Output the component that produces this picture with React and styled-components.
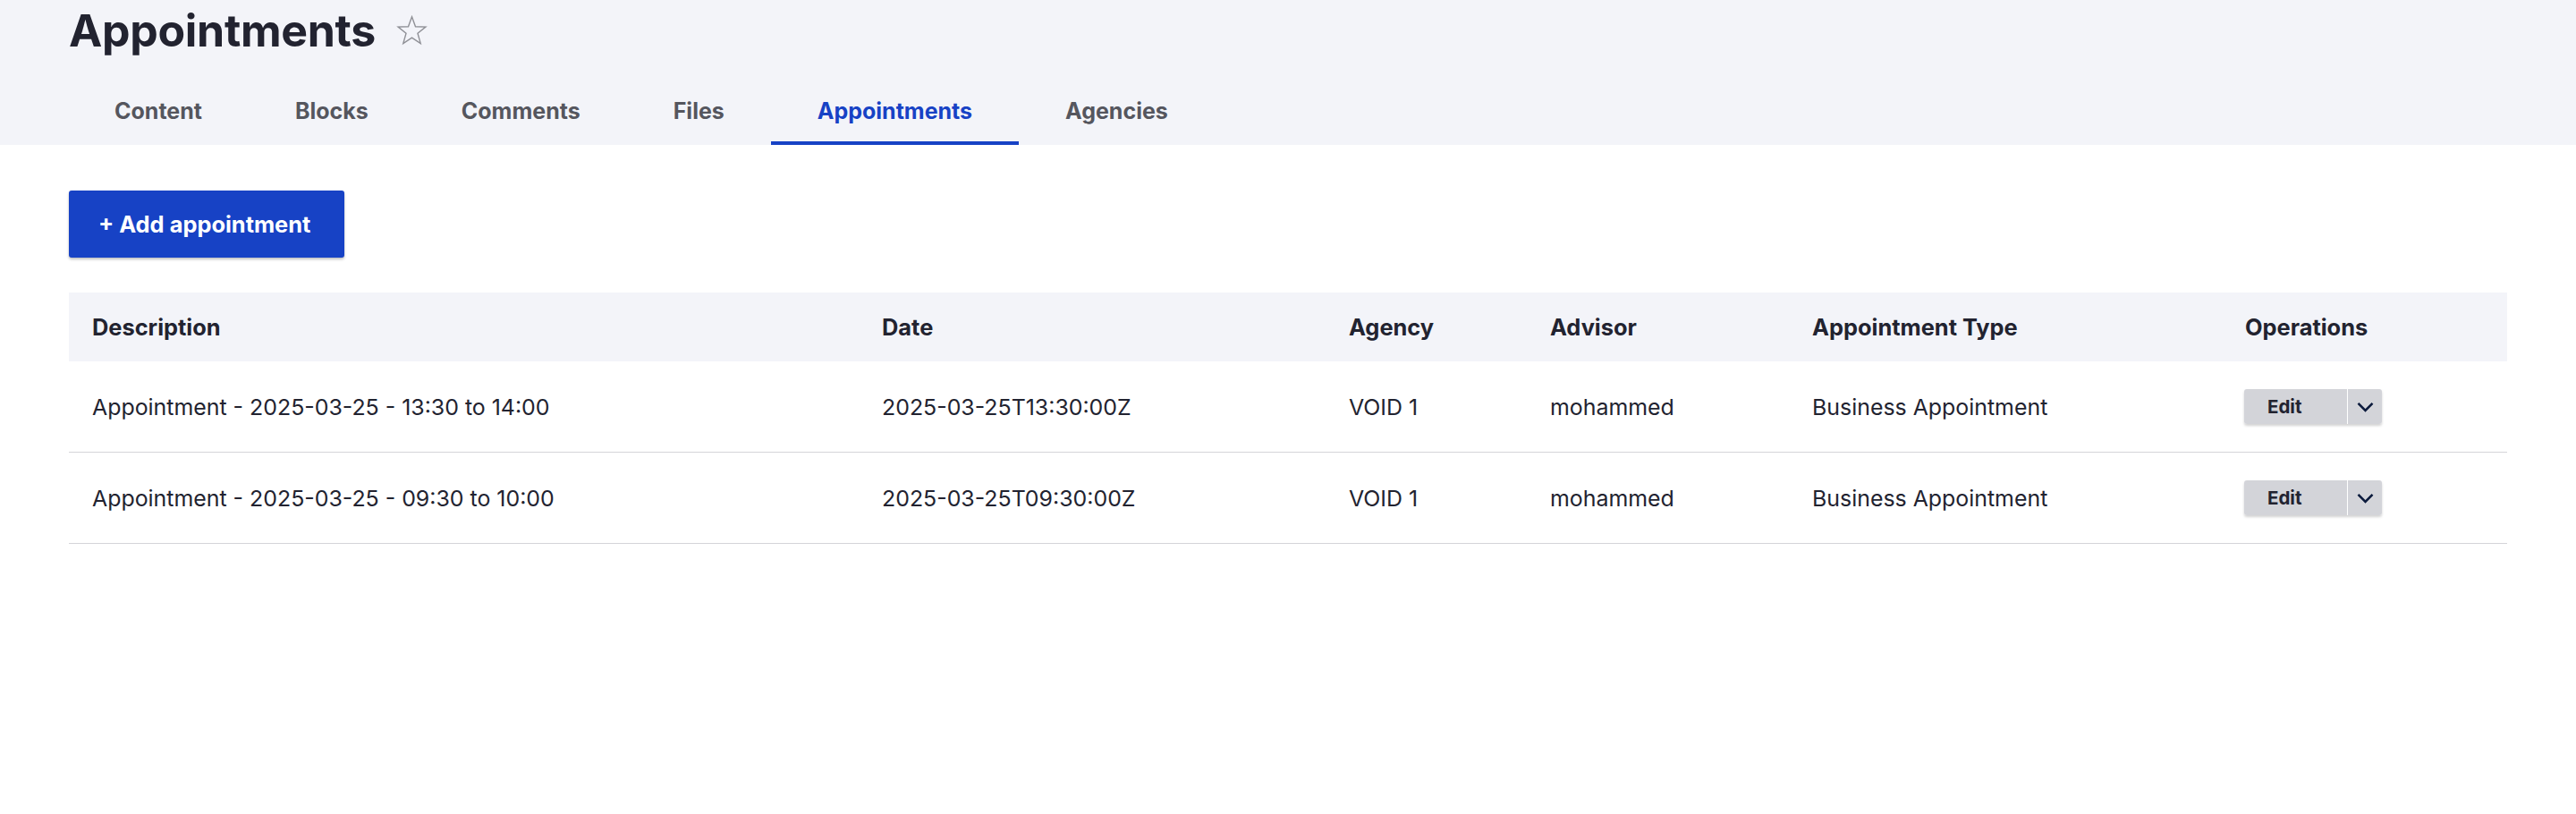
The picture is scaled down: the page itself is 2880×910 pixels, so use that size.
import React from 'react'
import styled, { createGlobalStyle } from 'styled-components'

const GlobalStyle = createGlobalStyle`
    body {
        margin: 0;
        background: #ffffff;
        font-family: 'Inter', 'Noto Sans', sans-serif;
        color: #222330;
    }
`

const tabs = ['Content', 'Blocks', 'Comments', 'Files', 'Appointments', 'Agencies']

const columns = ['Description', 'Date', 'Agency', 'Advisor', 'Appointment Type', 'Operations']

const rows = [
    {
        description: 'Appointment - 2025-03-25 - 13:30 to 14:00',
        date: '2025-03-25T13:30:00Z',
        agency: 'VOID 1',
        advisor: 'mohammed',
        type: 'Business Appointment'
    },
    {
        description: 'Appointment - 2025-03-25 - 09:30 to 10:00',
        date: '2025-03-25T09:30:00Z',
        agency: 'VOID 1',
        advisor: 'mohammed',
        type: 'Business Appointment'
    }
]

const Header = styled.header`
    background: #f3f4f9;
    padding: 4px 77px 0;
`

const TitleRow = styled.div`
    display: flex;
    align-items: center;
    gap: 22px;
`

const Title = styled.h1`
    margin: 0;
    font-size: 50px;
    line-height: 60px;
    font-weight: 700;
    letter-spacing: -0.3px;
    color: #222330;
`

const Tabs = styled.nav`
    display: flex;
    margin: 21px 0 0 -1px;
`

const Tab = styled.a`
    display: block;
    padding: 21px 52px 16px;
    font-size: 25px;
    line-height: 36px;
    font-weight: 700;
    color: ${props => props.active ? '#1742c5' : '#55565e'};
    border-bottom: 4px solid ${props => props.active ? '#1742c5' : 'transparent'};
    text-decoration: none;
`

const Main = styled.main`
    padding: 51px 77px 0;
`

const PrimaryButton = styled.button`
    display: inline-flex;
    align-items: center;
    height: 75px;
    padding: 0 38px 0 33px;
    border: none;
    border-radius: 3px;
    background: #1742c5;
    color: #ffffff;
    font-family: inherit;
    font-size: 25.4px;
    font-weight: 700;
    box-shadow: 0 2px 3px rgba(0, 0, 0, 0.25);
`

const Table = styled.div`
    margin-top: 39px;
    width: 100%;
`

const Row = styled.div`
    display: grid;
    grid-template-columns: 883px 522px 225px 293px 484px 1fr;
    align-items: center;
    height: ${props => props.head ? '77px' : '101px'};
    background: ${props => props.head ? '#f3f4f9' : 'transparent'};
    border-bottom: ${props => props.head ? 'none' : '1px solid #d4d4d8'};
`

const Cell = styled.div`
    padding: 0 26px;
    font-size: ${props => props.head ? '25.4px' : '24.9px'};
    font-weight: ${props => props.head ? 700 : 400};
    color: #222330;
    white-space: nowrap;
`

const DropButton = styled.div`
    display: inline-flex;
    height: 39px;
    border-radius: 3px;
    overflow: hidden;
    box-shadow: 0 2px 3px rgba(0, 0, 0, 0.18);
    margin-left: -1px;
`

const DropMain = styled.span`
    display: flex;
    align-items: center;
    width: 115px;
    box-sizing: border-box;
    padding-left: 26px;
    background: #d3d4d9;
    font-size: 20.5px;
    font-weight: 700;
    color: #222330;
`

const DropToggle = styled.span`
    display: flex;
    align-items: center;
    justify-content: center;
    width: 38px;
    margin-left: 1px;
    background: #d3d4d9;
`

const Star = () => (
    <svg width="37" height="37" viewBox="0 0 24 24">
        <polygon
            points="12,1.8 14.6,8.9 22,9.1 16.2,13.8 18.3,21.2 12,16.9 5.7,21.2 7.8,13.8 2,9.1 9.4,8.9"
            fill="none"
            stroke="#8f9096"
            strokeWidth="0.9"
            strokeLinejoin="miter"
        />
    </svg>
)

const Chevron = () => (
    <svg width="19" height="12" viewBox="0 0 19 12">
        <polyline points="1.5,1.8 9.5,9.8 17.5,1.8" fill="none" stroke="#0b1a3c" strokeWidth="2.6" />
    </svg>
)

export default () => {
    return (
        <>
            <GlobalStyle />
            <Header>
                <TitleRow>
                    <Title>Appointments</Title>
                    <Star />
                </TitleRow>
                <Tabs>
                    {tabs.map(tab => (
                        <Tab key={tab} active={tab === 'Appointments'}>{tab}</Tab>
                    ))}
                </Tabs>
            </Header>
            <Main>
                <PrimaryButton>+ Add appointment</PrimaryButton>
                <Table>
                    <Row head>
                        {columns.map(col => <Cell head key={col}>{col}</Cell>)}
                    </Row>
                    {rows.map((row, i) => (
                        <Row key={`row_${i}`}>
                            <Cell>{row.description}</Cell>
                            <Cell>{row.date}</Cell>
                            <Cell>{row.agency}</Cell>
                            <Cell>{row.advisor}</Cell>
                            <Cell>{row.type}</Cell>
                            <Cell>
                                <DropButton>
                                    <DropMain>Edit</DropMain>
                                    <DropToggle><Chevron /></DropToggle>
                                </DropButton>
                            </Cell>
                        </Row>
                    ))}
                </Table>
            </Main>
        </>
    )
}
